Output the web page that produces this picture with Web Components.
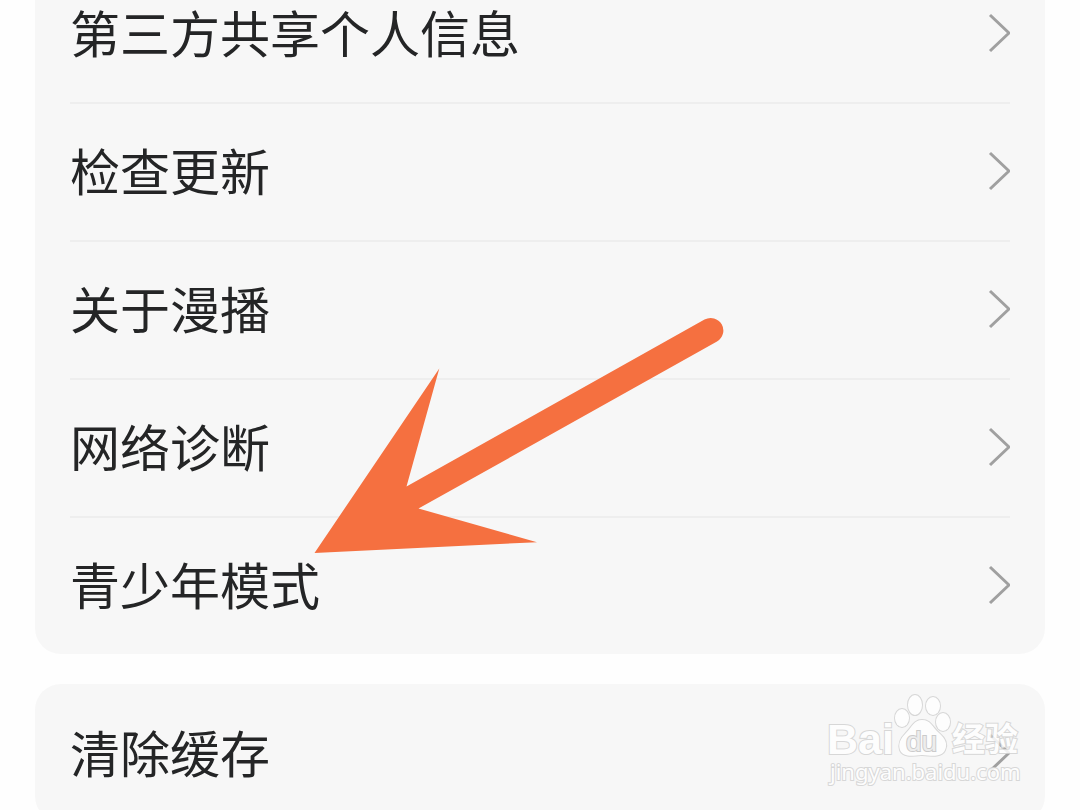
<!DOCTYPE html>
<html lang="zh-CN">
<head>
<meta charset="utf-8">
<meta name="viewport" content="width=device-width, initial-scale=1">
<title>设置</title>
<style>
body {
  margin:0;
  background-color:#fefefe;
  color:#242526;
  font-family:"Noto Sans CJK SC", sans-serif;
}
</style>
</head>
<body>
<settings-page>
  <settings-group>
    <settings-row href="#share">第三方共享个人信息</settings-row>
    <settings-row href="#update">检查更新</settings-row>
    <settings-row href="#about">关于漫播</settings-row>
    <settings-row href="#network">网络诊断</settings-row>
    <settings-row href="#teen">青少年模式</settings-row>
  </settings-group>
  <settings-group>
    <settings-row href="#cache">清除缓存</settings-row>
  </settings-group>
  <pointer-arrow slot="overlay"></pointer-arrow>
  <site-watermark slot="overlay"></site-watermark>
</settings-page>

<script>
/* Scrolled settings list, the first row is partly above the window */
class SettingsPage extends HTMLElement {
  constructor() {
    super();
    this.attachShadow({mode: 'open'}).innerHTML = `
<style>
:host {
  display:block;
  position:relative;
  height:100vh;
  overflow:hidden;
}
main {
  display:flex;
  flex-direction:column;
  gap:30px;
  margin-top:-36px;
  padding:0 35px;
}
</style>
<main><slot></slot></main>
<slot name="overlay"></slot>`;
  }
}

class SettingsGroup extends HTMLElement {
  constructor() {
    super();
    this.attachShadow({mode: 'open'}).innerHTML = `
<style>
:host {
  display:block;
  padding:0 35px;
  border-radius:26px;
  background-color:#f7f7f7;
}
::slotted(:not(:first-child)) {
  box-shadow:inset 0 2px #eeeeee;
}
</style>
<slot></slot>`;
  }
}

class SettingsRow extends HTMLElement {
  constructor() {
    super();
    const shadow = this.attachShadow({mode: 'open'});
    shadow.innerHTML = `
<style>
:host {
  display:block;
}
a {
  display:flex;
  align-items:center;
  justify-content:space-between;
  height:138px;
  color:inherit;
  font-size:50px;
  line-height:72px;
  text-decoration:none;
}
span {
  padding-bottom:4px;
}
svg {
  width:22px;
  height:40px;
  fill:none;
  stroke:#a0a0a0;
  stroke-width:3;
}
</style>
<a><span><slot></slot></span><svg viewBox="0 0 22 40" aria-hidden="true"><path d="M2 2 L21 20 L2 38"/></svg></a>`;
    shadow.querySelector('a').href = this.getAttribute('href');
  }
}

class PointerArrow extends HTMLElement {
  constructor() {
    super();
    this.attachShadow({mode: 'open'}).innerHTML = `
<style>
:host {
  position:absolute;
  left:314px;
  top:317px;
  pointer-events:none;
}
svg {
  display:block;
  width:410px;
  height:237px;
}
</style>
<svg viewBox="314 317 410 237" aria-hidden="true">
  <path fill="#f57040" d="M314.5 553 L439.3 368.5 L406.5 486.5 L704.5 319.6 A12.5 12.5 0 0 1 717 341.5 L418.5 508.6 L537 542.2 Z"/>
</svg>`;
  }
}

class SiteWatermark extends HTMLElement {
  constructor() {
    super();
    this.attachShadow({mode: 'open'}).innerHTML = `
<style>
:host {
  position:absolute;
  right:56px;
  bottom:16px;
  opacity:0.85;
  pointer-events:none;
}
svg {
  display:block;
  width:200px;
  height:104px;
  fill:#ffffff;
  stroke:#d2d2d2;
  stroke-width:2;
  paint-order:stroke;
}
.latin {
  font:bold 43px "Liberation Sans", sans-serif;
}
.du {
  font:28px "Liberation Sans", sans-serif;
  fill:#ececec;
  stroke:#c4c4c4;
}
.cjk {
  font:bold 33px "Noto Sans CJK SC", sans-serif;
}
.domain {
  font:22px "Noto Sans", sans-serif;
}
</style>
<svg viewBox="824 690 200 104">
  <text class="latin" x="827" y="754">Bai</text>
  <g>
    <ellipse cx="902" cy="718" rx="7" ry="9"/>
    <ellipse cx="915" cy="705" rx="7" ry="10"/>
    <ellipse cx="933" cy="706" rx="7" ry="9"/>
    <ellipse cx="943" cy="722" rx="7" ry="9"/>
    <path d="M922 720 C914 720 912 727 906 733 C900 739 898 744 900 750 C903 757 911 756 922 755 C933 756 942 757 945 750 C948 744 945 738 939 733 C932 727 931 720 922 720 Z"/>
  </g>
  <text class="du" x="906" y="751">du</text>
  <text class="cjk" x="952" y="751">经验</text>
  <text class="domain" x="830" y="780">jingyan.baidu.com</text>
</svg>`;
  }
}

customElements.define('settings-page',SettingsPage);
customElements.define('settings-group',SettingsGroup);
customElements.define('settings-row',SettingsRow);
customElements.define('pointer-arrow',PointerArrow);
customElements.define('site-watermark',SiteWatermark);
</script>
</body>
</html>
